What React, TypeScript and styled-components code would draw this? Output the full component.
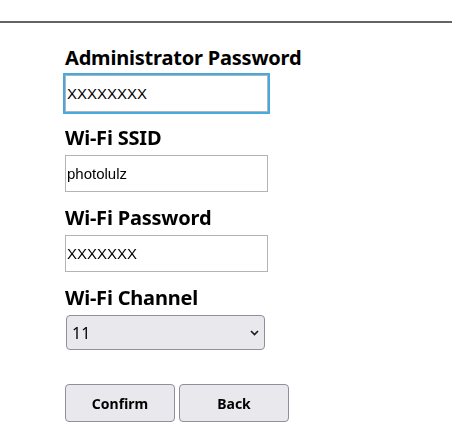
import * as React from 'react';
import styled, { createGlobalStyle } from 'styled-components';

const GlobalStyle = createGlobalStyle`
  body {
    margin: 0;
    background: #ffffff;
    font-family: 'Noto Sans', 'Open Sans', sans-serif;
    color: #000000;
  }
`;

const Rule = styled.hr`
  margin: 21px 0 0;
  height: 0;
  border: none;
  border-top: 2px solid #646464;
`;

const Form = styled.form`
  display: flex;
  flex-direction: column;
  gap: 12px;
  padding: 21px 0 0 65px;
`;

const Field = styled.div`
  display: flex;
  flex-direction: column;
  align-items: flex-start;
  gap: 4px;
`;

const Label = styled.label`
  font-size: 20px;
  font-weight: 700;
  line-height: 27px;
  letter-spacing: -0.2px;
`;

const TextInput = styled.input`
  box-sizing: border-box;
  width: 203px;
  height: 37px;
  margin: 0;
  padding: 1px;
  border: 1px solid #b4b4b4;
  border-radius: 0;
  font-family: 'Liberation Sans', Arial, sans-serif;
  font-size: 15px;
  color: #000000;
  background: #ffffff;

  &:focus {
    outline: 2px solid #45a9e2;
    outline-offset: 0;
  }
`;

const SelectWrap = styled.div`
  position: relative;
  display: flex;
  margin-left: 1px;
`;

const Select = styled.select`
  display: block;
  box-sizing: border-box;
  width: 199px;
  height: 35px;
  margin: 0;
  padding: 0 24px 0 5px;
  appearance: none;
  border: 1px solid #8f8f9d;
  border-radius: 4px;
  background: #e9e8ed;
  font-family: 'Noto Sans', sans-serif;
  font-size: 16px;
  color: #000000;
`;

const Chevron = styled.svg`
  position: absolute;
  right: 6px;
  top: 15px;
  pointer-events: none;
`;

const Actions = styled.div`
  display: flex;
  gap: 4px;
  margin-top: 22px;
`;

const Button = styled.button`
  box-sizing: border-box;
  width: 110px;
  height: 38px;
  border: 1px solid #8f8f9d;
  border-radius: 4px;
  background: #e9e8ed;
  font-family: 'Noto Sans', sans-serif;
  font-size: 14px;
  font-weight: 700;
  color: #000000;
  cursor: pointer;
`;

const channels = ['1', '2', '3', '4', '5', '6', '7', '8', '9', '10', '11', '12', '13'];

export default function App(): JSX.Element {
  return (
    <>
      <GlobalStyle />
      <Rule />
      <Form onSubmit={(e) => e.preventDefault()}>
        <Field>
          <Label htmlFor="admin-pass">Administrator Password</Label>
          <TextInput id="admin-pass" type="text" defaultValue="XXXXXXXX" autoFocus />
        </Field>
        <Field>
          <Label htmlFor="ssid">Wi-Fi SSID</Label>
          <TextInput id="ssid" type="text" defaultValue="photolulz" />
        </Field>
        <Field>
          <Label htmlFor="wifi-pass">Wi-Fi Password</Label>
          <TextInput id="wifi-pass" type="text" defaultValue="XXXXXXX" />
        </Field>
        <Field>
          <Label htmlFor="channel">Wi-Fi Channel</Label>
          <SelectWrap>
            <Select id="channel" defaultValue="11">
              {channels.map((c) => (
                <option key={c} value={c}>
                  {c}
                </option>
              ))}
            </Select>
            <Chevron width="9" height="6" viewBox="0 0 9 6">
              <path d="M1 1 L4.5 4.5 L8 1" fill="none" stroke="#1a1a1a" strokeWidth="1.6" />
            </Chevron>
          </SelectWrap>
        </Field>
        <Actions>
          <Button type="submit">Confirm</Button>
          <Button type="button">Back</Button>
        </Actions>
      </Form>
    </>
  );
}
